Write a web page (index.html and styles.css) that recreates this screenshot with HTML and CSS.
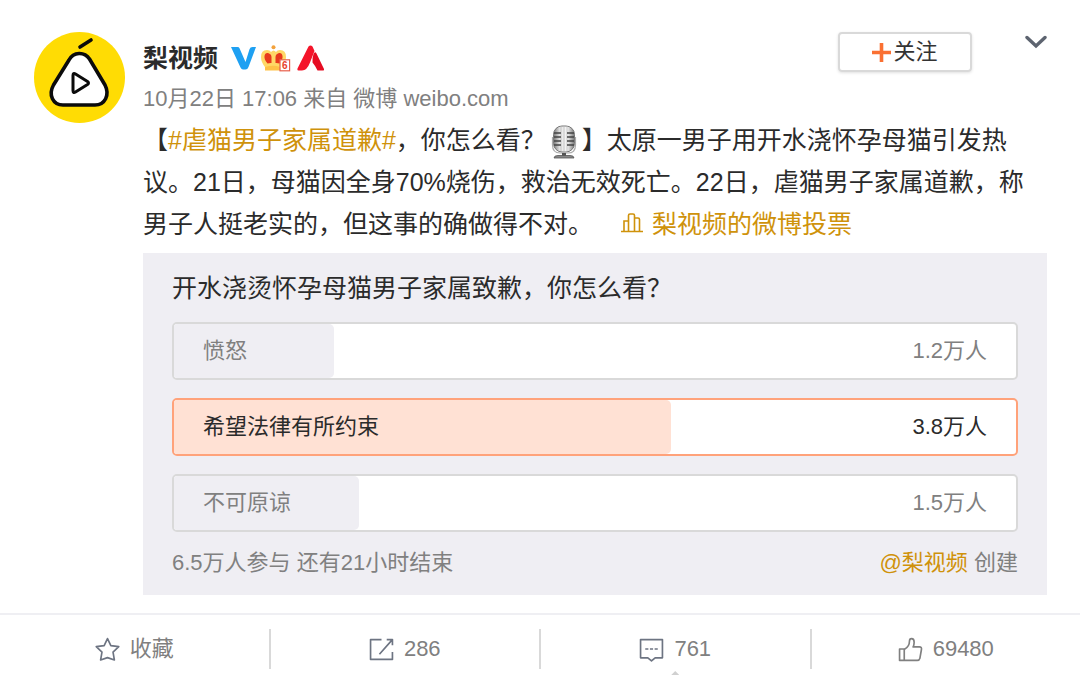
FILE: index.html
```
<!DOCTYPE html>
<html lang="zh-CN">
<head>
<meta charset="utf-8">
<meta name="viewport" content="width=device-width, initial-scale=1">
<title>梨视频的微博</title>
<link rel="stylesheet" href="styles.css">
</head>

<body>
<div class="feed">
  <div class="avatar">
    <svg viewBox="0 0 91 91" fill="none" stroke="#0b0b0b" stroke-width="3.6" stroke-linecap="round" stroke-linejoin="round">
      <circle cx="45.5" cy="45.5" r="45.5" fill="#ffdc04" stroke="none"/>
      <path d="M35 28C39.5 19.5 50.5 19.5 55.5 27L71 53C76 63 71 73 61 73H29C19 73 14 63 19.5 53Z" fill="#fff"/>
      <path d="M46 15L57 8"/>
      <path d="M39 43.5Q39 40.5 41.5 42L53.5 49.5Q55.5 51 53.5 52.5L41.5 60Q39 61.5 39 58.5Z" stroke-width="3"/>
    </svg>
  </div>
  <div class="detail">
    <div class="head">
      <div class="info">
        <div class="name">
          <a href="#">梨视频</a>
          <svg class="badge-v" viewBox="0 0 25 23">
            <path d="M0 0H6.5Q8 0 8.5 1.2L14.5 15L18.5 2.2Q19.2 0 21.5 0H25L17.5 20Q16.5 22.5 14.5 22.5H12Q10.5 22.5 9.5 20.5Z" fill="#1ea0f2"/>
          </svg>
          <svg class="badge-crown" viewBox="0 0 30 27">
            <circle cx="12.5" cy="2.3" r="2" fill="#f3a23c"/>
            <path d="M4 25V22Q0 17 0 12Q0 5 6 5Q9 5 10 7Q12.5 4 15 7Q16 5 19 5Q25 5 25 12Q25 17 21 22V25Z" fill="#ffd866"/>
            <path d="M6.5 18.5Q3 14.5 3.5 11Q4 7.5 7 8Q10.5 9 10.5 12V18Q8.5 17.8 6.500 18.500ZM18.5 18.500Q22 14.5 21.5 11Q21 7.5 18 8Q14.5 9 14.5 12V18Q16.500 17.800 18.500 18.500Z" fill="#e8391c"/>
            <path d="M4 22Q12.5 19.5 19 22V25.5H4Z" fill="#ffc247"/>
            <rect x="19" y="14.8" width="9.6" height="11" fill="#fff" stroke="#e8604c" stroke-width="1.2"/>
            <text x="23.8" y="24" text-anchor="middle" class="level">6</text>
          </svg>
          <svg class="badge-a" viewBox="0 0 28 26">
            <path d="M11.5 1.5Q13.5 -.5 15.5 1.5L17.5 6L13 17.5Q10 25.5 5 25.5H1.5Q0 25.5 .5 23.5Z" fill="#f4152a"/>
            <path d="M16.5 9Q18 6 19.5 8.500L27 24Q27.5 25.5 26 25.5H20.5Q18.5 21 15.5 17.5Q15 13.500 16.5 9Z" fill="#e60c22"/>
          </svg>
        </div>
        <div class="from">10月22日 17:06 来自 微博 weibo.com</div>
      </div>
      <button type="button" class="follow">
        <svg viewBox="0 0 19 19" stroke="#fa7032" stroke-width="3.6"><path d="M9.5 0V19M0 9.5H19"/></svg>关注
      </button>
      <button type="button" class="more" aria-label="更多">
        <svg viewBox="0 0 22 14" fill="none" stroke="#5d6470" stroke-width="3.4" stroke-linecap="round"><path d="M2 2.5L11 11L20 2.5"/></svg>
      </button>
    </div>

    <p class="text">【<a href="#">#虐猫男子家属道歉#</a>，你怎么看？<svg class="mic" viewBox="0 0 26 34">
        <defs>
          <linearGradient id="metal">
            <stop offset="0" stop-color="#777"/>
            <stop offset=".3" stop-color="#e4e4e4"/>
            <stop offset=".65" stop-color="#f7f7f7"/>
            <stop offset="1" stop-color="#777"/>
          </linearGradient>
        </defs>
        <rect x="2.5" y="1" width="21" height="26" rx="8.5" fill="url(#metal)" stroke="#777"/>
        <path d="M10 1V26M13 1V26M16 1V26" stroke="#bbb" stroke-width=".8"/>
        <path d="M3 8H10M3 12H10M3 16H10M3 20H10M16 8H23M16 12H23M16 16H23M16 20H23" stroke="#444" stroke-width="1.6"/>
        <path d="M1.5 12V20Q1.5 28 9 28H17Q24.5 28 24.5 20V12" fill="none" stroke="#aaa" stroke-width="1.2"/>
        <path d="M13 28V31" stroke="#555" stroke-width="4"/>
        <path d="M3 33Q3 30.5 7 30.5H19Q23 30.5 23 33Z" fill="#888" stroke="#555" stroke-width=".8"/>
      </svg>】太原一男子用开水浇怀孕母猫引发热议。21日，母猫因全身70%烧伤，救治无效死亡。22日，虐猫男子家属道歉，称男子人挺老实的，但这事的确做得不对。<a href="#" class="vote-link"><svg class="bars" viewBox="0 0 22 20" fill="none" stroke="#cf920b" stroke-width="1.6"><path d="M0 18.5H22M3 18V8H7.5M7.5 18V2.5Q7.5 1 9 1H12Q13.5 1 13.5 2.5V18M13.5 5H17Q18.5 5 18.5 6.5V18"/></svg>梨视频的微博投票</a></p>

    <div class="vote">
      <h3>开水浇烫怀孕母猫男子家属致歉，你怎么看？</h3>
      <ul>
        <li><span class="fill" style="width:19%"></span><span class="label">愤怒</span><span class="num">1.2万人</span></li>
        <li class="on"><span class="fill" style="width:59%"></span><span class="label">希望法律有所约束</span><span class="num">3.8万人</span></li>
        <li><span class="fill" style="width:22%"></span><span class="label">不可原谅</span><span class="num">1.5万人</span></li>
      </ul>
      <div class="vote-foot">
        <span>6.5万人参与 还有21小时结束</span>
        <span><a href="#">@梨视频</a> 创建</span>
      </div>
    </div>
  </div>
</div>

<div class="handle">
  <div class="item"><button type="button">
    <svg viewBox="0 0 24 24"><path d="M12 1.5L15.2 8.3L22.8 9.3L17.3 14.5L18.6 22L12 19.8L5.4 22L6.7 14.5L1.2 9.3L8.8 8.3Z"/></svg>收藏
  </button></div>
  <div class="item"><button type="button">
    <svg viewBox="0 0 24 24"><path d="M12 2.5H1.5V21.5H22.5V14.5M10 16.5L22 3M17 2.5H22.5V8"/></svg>286
  </button></div>
  <div class="item comment"><button type="button">
    <svg viewBox="0 0 24 24"><path d="M1.5 2.5H22.5V20H15.5L12 23L8.5 20H1.5Z"/><path d="M6 11.5H9M10.5 11.5H13.5M15 11.5H18"/></svg>761
  </button></div>
  <div class="item like"><button type="button">
    <svg viewBox="0 0 24 24"><path d="M1.5 11.5H6V22.5H1.5ZM6 12Q11 9 11 4Q11 1.5 13 1.5Q15.5 1.5 15.5 5Q15.5 7.5 14.5 9.5H20.5Q23 9.5 22.5 12L21 20.5Q20.5 22.5 18.5 22.5H6"/></svg>69480
  </button></div>
</div>
</body>
</html>
```
FILE: styles.css
```
*{margin:0; padding:0; box-sizing:border-box;}
body{
	font-family:"Liberation Sans","Noto Sans CJK SC",sans-serif;
	font-size:22px;
	line-height:40px;
	color:#2b2b2b;
	background:#fff;
}
a{
	color:#cf920b;
	text-decoration:none;
}
button{
	font:inherit;
	border:none;
	background:none;
	cursor:pointer;
}
svg{flex:none;}
.feed{
	display:flex;
	gap:18px;
	padding:32px 33px 0 34px;
}
.avatar{
	flex:none;
	width:91px;
}
.avatar svg{
	display:block;
	width:91px;
	height:91px;
}
.detail{
	flex:1;
	min-width:0;
}
/* 头部 */
.head{
	display:flex;
	align-items:flex-start;
}
.info{
	flex:1;
	padding-top:5px;
}
.name{
	display:flex;
	align-items:center;
	height:42px;
	font-size:25px;
	font-weight:bold;
}
.name a{
	color:#2b2b2b;
	margin-right:13px;
}
.badge-v{
	width:25px;
	height:23px;
}
.badge-crown{
	width:30px;
	height:27px;
	margin:0 6px 0 5px;
}
.badge-a{
	width:28px;
	height:26px;
}
.level{
	font-size:10px;
	font-weight:bold;
	fill:#e8402c;
}
.from{
	color:#808080;
}
.follow{
	display:flex;
	align-items:center;
	justify-content:center;
	gap:2px;
	width:134px;
	height:40px;
	border:2px solid #d9d9d9;
	border-radius:4px;
	box-shadow:0 1px 3px rgba(0,0,0,.12);
	color:#333;
}
.follow svg{
	width:19px;
	height:19px;
}
.more{
	margin-left:53px;
	padding-top:3px;
}
.more svg{
	display:block;
	width:22px;
	height:14px;
}
/* 正文 */
.text{
	font-size:25px;
	line-height:42px;
}
.mic{
	width:26px;
	height:34px;
	margin:0 5px;
	vertical-align:middle;
}
.vote-link{
	margin-left:28px;
}
.bars{
	width:22px;
	height:20px;
	margin-right:9px;
}
/* 投票 */
.vote{
	margin-top:8px;
	padding:14px 29px 11px;
	background:#efeef3;
}
.vote h3{
	margin-bottom:13px;
	font-size:25px;
	font-weight:normal;
	line-height:42px;
}
.vote ul{
	display:grid;
	gap:18px;
	list-style:none;
}
.vote li{
	position:relative;
	display:flex;
	align-items:center;
	justify-content:space-between;
	height:58px;
	padding:0 29px;
	border:2px solid #d9d9d9;
	border-radius:5px;
	background:#fff;
	color:#808080;
}
.vote .fill{
	position:absolute;
	left:0;
	top:0;
	height:100%;
	border-radius:3px 5px 5px 3px;
	background:#efeef3;
}
.vote .label,.vote .num{
	position:relative;
}
.vote .on{
	border-color:#ffa27a;
	color:#2b2b2b;
}
.vote .on .fill{
	background:#ffe1d4;
}
.vote-foot{
	display:flex;
	justify-content:space-between;
	margin-top:10px;
	line-height:42px;
	color:#808080;
}
/* 底部操作 */
.handle{
	display:flex;
	margin-top:18px;
	padding:14px 0 6px;
	border-top:2px solid #efeff3;
	color:#808080;
}
.item{
	position:relative;
	flex:1;
	height:40px;
	border-right:2px solid #d9d9d9;
}
.item:last-child{
	border-right:none;
}
.item button{
	display:flex;
	align-items:center;
	justify-content:center;
	gap:10px;
	width:100%;
	height:40px;
	color:#808080;
}
.item svg{
	width:25px;
	height:25px;
	fill:none;
	stroke:#6d7482;
	stroke-width:1.6;
	stroke-linejoin:round;
}
.like svg{
	stroke:#808080;
}
/* 当前展开的小三角 */
.comment:after{
	content:"";
	position:absolute;
	left:50%;
	top:42px;
	width:8px;
	height:4px;
	margin-left:-4px;
	background:#d0d0d0;
	clip-path:polygon(50% 0,100% 100%,0 100%);
}
```
